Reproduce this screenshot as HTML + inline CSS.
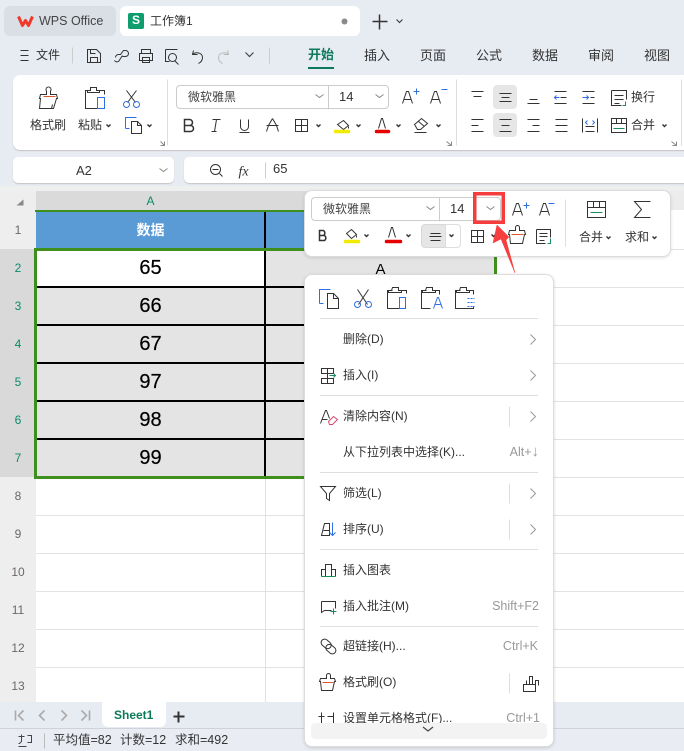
<!DOCTYPE html>
<html lang="zh"><head><meta charset="utf-8">
<style>
html,body{margin:0;padding:0}
body{width:684px;height:751px;overflow:hidden;position:relative;background:#e7ebf2;font-family:"Liberation Sans","Noto Sans CJK SC",sans-serif;font-size:12px;color:#333}
div{position:absolute;box-sizing:border-box}
.t{position:absolute;white-space:nowrap;line-height:16px;font-size:12px;color:#333;z-index:6}
.r{text-align:right;color:#999;font-size:12.5px}
.c{text-align:center}
.h{background:#dfdfdf;height:1px;left:320px;width:218px;z-index:5}
.rh{left:0;width:36px;text-align:center;line-height:38px;height:38px;font-size:12px;color:#6c666c;background:#eeeeee}
.rs{background:#d9d9d9;color:#0b8a68}
.ln{left:36px;width:648px;height:1px;background:#e2e2e2}
.n{left:36px;width:229px;text-align:center;font-size:20px;line-height:38px;height:38px;color:#000;-webkit-text-stroke:.2px #000}
</style></head><body>

<div style="left:4px;top:6px;width:112px;height:30px;background:#dadfe6;border-radius:6px"></div>
<div style="left:120px;top:6px;width:240px;height:30px;background:#fff;border-radius:6px"></div>
<div style="left:128px;top:13px;width:16px;height:16px;background:#0f9d6e;border-radius:2px;color:#fff;font-weight:bold;font-size:12px;line-height:15px;text-align:center">S</div>
<span class="t" style="left:39px;top:13px;font-size:12.5px;color:#444">WPS Office</span>
<span class="t" style="left:150px;top:13px;font-size:12px">工作簿1</span>

<span class="t" style="left:36px;top:47px">文件</span>
<span class="t" style="left:308px;top:47px;font-size:13px;font-weight:bold;color:#0c7a5a">开始</span>
<div style="left:308px;top:67px;width:26px;height:2px;background:#0c7a5a"></div>
<span class="t" style="left:364px;top:48px;font-size:13px">插入</span>
<span class="t" style="left:420px;top:48px;font-size:13px">页面</span>
<span class="t" style="left:476px;top:48px;font-size:13px">公式</span>
<span class="t" style="left:532px;top:48px;font-size:13px">数据</span>
<span class="t" style="left:588px;top:48px;font-size:13px">审阅</span>
<span class="t" style="left:644px;top:48px;font-size:13px">视图</span>

<div style="left:13px;top:75px;width:680px;height:75px;background:#fff;border-radius:7px;box-shadow:0 1px 1px #c4c4c4"></div>
<div style="left:176px;top:85px;width:213px;height:24px;border:1px solid #ccc;border-radius:4px"></div>
<div style="left:493px;top:85px;width:24px;height:24px;background:#e6e6e6;border-radius:4px"></div>
<div style="left:493px;top:113px;width:24px;height:24px;background:#e6e6e6;border-radius:4px"></div>
<span class="t" style="left:30px;top:117px;font-size:12px">格式刷</span>
<span class="t" style="left:78px;top:117px">粘贴</span>
<span class="t" style="left:188px;top:89px;color:#444">微软雅黑</span>
<span class="t" style="left:339px;top:89px;font-size:13px">14</span>
<span class="t" style="left:631px;top:89px">换行</span>
<span class="t" style="left:631px;top:117px">合并</span>

<div style="left:13px;top:157px;width:161px;height:26px;background:#fff;border-radius:5px;box-shadow:0 1px 1px #c4c4c4"></div>
<div style="left:184px;top:157px;width:510px;height:26px;background:#fff;border-radius:5px;box-shadow:0 1px 1px #c4c4c4"></div>
<span class="t" style="left:76px;top:163px;font-size:13px">A2</span>
<span class="t" style="left:273px;top:161px;font-size:13px">65</span>

<!-- grid -->
<div style="left:0;top:186px;width:684px;height:516px;background:#fff"></div>
<div style="left:0;top:186px;width:684px;height:5px;background:#eef0f0"></div>
<div style="left:0;top:191px;width:36px;height:20px;background:#eeeeee"></div>
<div style="left:36px;top:191px;width:648px;height:19px;background:#ececec"></div>
<div style="left:36px;top:191px;width:459px;height:20px;background:#dadada"></div>
<span class="t" style="left:36px;top:193px;width:229px;text-align:center;color:#0b8a68">A</span>
<div class="ln" style="top:249px"></div><div class="ln" style="top:287px"></div><div class="ln" style="top:325px"></div><div class="ln" style="top:363px"></div><div class="ln" style="top:401px"></div><div class="ln" style="top:439px"></div><div class="ln" style="top:477px"></div><div class="ln" style="top:515px"></div><div class="ln" style="top:553px"></div><div class="ln" style="top:591px"></div><div class="ln" style="top:629px"></div><div class="ln" style="top:667px"></div>
<div style="left:265px;top:478px;width:1px;height:224px;background:#e2e2e2"></div>
<div style="left:495px;top:478px;width:1px;height:224px;background:#e2e2e2"></div>
<div class="rh" style="top:211px">1</div>
<div class="rh rs" style="top:249px">2</div><div class="rh rs" style="top:287px">3</div><div class="rh rs" style="top:325px">4</div><div class="rh rs" style="top:363px">5</div><div class="rh rs" style="top:401px">6</div><div class="rh rs" style="top:439px">7</div>
<div class="rh" style="top:477px">8</div><div class="rh" style="top:515px">9</div><div class="rh" style="top:553px">10</div><div class="rh" style="top:591px">11</div><div class="rh" style="top:629px">12</div><div class="rh" style="top:667px;height:35px">13</div>
<div style="left:36px;top:212px;width:459px;height:37px;background:#5b9bd5"></div>
<span class="t" style="left:36px;top:222px;width:229px;text-align:center;color:#fff;font-weight:bold;font-size:14px">数据</span>
<div style="left:37px;top:250px;width:458px;height:226px;background:#e4e4e4"></div>
<div style="left:37px;top:251px;width:228px;height:36px;background:#fff"></div>
<div style="left:37px;top:286px;width:458px;height:2px;background:#000"></div>
<div style="left:37px;top:324px;width:458px;height:2px;background:#000"></div>
<div style="left:37px;top:362px;width:458px;height:2px;background:#000"></div>
<div style="left:37px;top:400px;width:458px;height:2px;background:#000"></div>
<div style="left:37px;top:438px;width:458px;height:2px;background:#000"></div>
<div style="left:264px;top:211px;width:2px;height:266px;background:#000"></div>
<div style="left:35px;top:210px;width:460px;height:2px;background:#3f8f1f"></div>
<div style="left:34px;top:248px;width:463px;height:231px;border:3px solid #3f8f1f"></div>
<div class="n" style="top:249px">65</div><div class="n" style="top:287px">66</div><div class="n" style="top:325px">67</div><div class="n" style="top:363px">97</div><div class="n" style="top:401px">98</div><div class="n" style="top:439px">99</div>
<div style="left:266px;width:229px;top:251px;text-align:center;font-size:15px;line-height:37px;height:23px;overflow:hidden;color:#000">A</div>

<!-- sheet bar -->
<div style="left:0;top:702px;width:684px;height:26px;background:#e7ebf2"></div>
<div style="left:102px;top:702px;width:64px;height:25px;background:#fff;border-radius:0 0 6px 6px"></div>
<span class="t" style="left:114px;top:707px;font-weight:bold;color:#0c7a5a">Sheet1</span>
<div style="left:0;top:728px;width:684px;height:1px;background:#cfd2d6"></div>
<div style="left:0;top:729px;width:684px;height:22px;background:#e9edf3"></div>
<span class="t" style="left:53px;top:732px;font-size:12.5px">平均值=82</span>
<span class="t" style="left:120px;top:732px;font-size:12.5px">计数=12</span>
<span class="t" style="left:175px;top:732px;font-size:12.5px">求和=492</span>

<!-- mini toolbar -->
<div style="left:304px;top:190px;width:367px;height:67px;background:#fff;border-radius:8px;border:1px solid #dcdcdc;box-shadow:0 1px 3px rgba(0,0,0,.12);z-index:3"></div>
<div style="left:311px;top:197px;width:190px;height:24px;border:1px solid #ccc;border-radius:4px;z-index:4"></div>
<div style="left:421px;top:224px;width:40px;height:24px;background:#e6e6e6;border:1px solid #d8d8d8;border-radius:4px;z-index:4"></div>
<div style="left:445px;top:224px;width:16px;height:24px;background:#fff;border:1px solid #ddd;border-radius:0 4px 4px 0;z-index:4"></div>
<span class="t" style="left:323px;top:201px;color:#444">微软雅黑</span>
<span class="t" style="left:450px;top:201px;font-size:13px">14</span>
<span class="t" style="left:579px;top:229px">合并</span>
<span class="t" style="left:625px;top:229px">求和</span>

<!-- context menu -->
<div style="left:304px;top:274px;width:250px;height:473px;background:#fff;border-radius:8px;border:1px solid #dcdcdc;box-shadow:0 1px 3px rgba(0,0,0,.15);z-index:3"></div>
<div class="h" style="top:318px"></div><div class="h" style="top:395px"></div><div class="h" style="top:472px"></div><div class="h" style="top:549px"></div><div class="h" style="top:626px"></div>
<span class="t" style="left:343px;top:331px">删除(D)</span>
<span class="t" style="left:343px;top:367px">插入(I)</span>
<span class="t" style="left:343px;top:408px">清除内容(N)</span>
<span class="t" style="left:343px;top:444px">从下拉列表中选择(K)...</span>
<span class="t r" style="right:145px;top:444px">Alt+<span style="font-size:15px;line-height:12px">↓</span></span>
<span class="t" style="left:343px;top:485px">筛选(L)</span>
<span class="t" style="left:343px;top:521px">排序(U)</span>
<span class="t" style="left:343px;top:562px">插入图表</span>
<span class="t" style="left:343px;top:598px">插入批注(M)</span>
<span class="t r" style="right:145px;top:598px">Shift+F2</span>
<span class="t" style="left:343px;top:638px">超链接(H)...</span>
<span class="t r" style="right:146px;top:638px">Ctrl+K</span>
<span class="t" style="left:343px;top:674px">格式刷(O)</span>
<span class="t" style="left:343px;top:710px">设置单元格格式(F)...</span>
<span class="t r" style="right:144px;top:710px">Ctrl+1</span>

<svg width="684" height="751" viewBox="0 0 684 751" style="position:absolute;left:0;top:0;z-index:7" fill="none" stroke="#333" stroke-width="1">
<g transform="translate(.5 .5)">
<!-- WPS logo -->
<path d="M18 16l4 9 3-5 3 5 4-9" stroke="#f0392b" stroke-width="3" stroke-linejoin="round"/>
<circle cx="344" cy="21" r="3" fill="#8a8a8a" stroke="none"/>
<path d="M372 21h15M379 14v15" stroke="#333" stroke-width="1.500"/>
<path d="M396 19l3 3 3-3M245 52l4 4 4-4" stroke="#444" stroke-width="1.200"/>
<!-- quick bar -->
<path d="M20 50h8M20 55h8M20 60h8"/>
<path d="M72 47v16M269 47v16" stroke="#ccc"/>
<path d="M87 49h9l4 4v9H87zM90 49v4h5M90 62v-5h7v5"/>
<path d="M115 57a3 3 0 0 1 3-3h2l3-4h2a3 3 0 0 1 0 6h-3M114 60a3 3 0 0 0 4 1l4-6"/>
<path d="M141 53v-4h9v4M139 53h13v7h-13zM142 57h7v5h-7z"/>
<path d="M165 49h12M165 49v12h4M174 60l4 4"/><circle cx="172" cy="57" r="4"/>
<path d="M193 50l-1 4h5M192 54c3-3 10-2 10 3 0 3-2 5-4 6"/>
<path d="M227 50l1 4h-5M228 54c-3-3-10-2-10 3 0 3 2 5 4 6" stroke="#bbb"/>
<!-- ribbon left -->
<path d="M46 94v-3.500a2.500 2.500 0 1 1 4 0V94h6l1 4h-1l-3 10H39l1-10h-1l1-4zM51 108l1-4"/>
<path d="M43 96h12" stroke="#d8592b"/>
<path d="M90 90h-5v18h12M99 90h5v4M90 87h6v3h3v2h-12v-2h3z"/>
<rect x="97" y="97" width="7" height="11" stroke="#2f6fe0"/>
<path d="M126 90l9 12M136 90l-9 12"/>
<circle cx="126" cy="104" r="3" stroke="#2f6fe0"/><circle cx="136" cy="104" r="3" stroke="#2f6fe0"/>
<path d="M125 128v-11h11M125 128h4" stroke="#2f6fe0"/>
<path d="M131 121h6l4 4v8h-10zM137 121v4h4"/>
<path d="M106 124l2 2 2-2M147 124l2 2 2-2M316 124l2 2 2-2M356 124l2 2 2-2M396 124l2 2 2-2M436 124l2 2 2-2M662 124l2 2 2-2" stroke-width="1.400"/>
<path d="M160 141l4 4M164 141v4h-4M446 141l5 4M451 141v4h-4M671 141l5 4M676 141v4h-4" stroke="#888"/>
<path d="M167 79v66M456 79v66M681 79v66" stroke="#ddd"/>
<!-- combos -->
<path d="M328 85v24" stroke="#ccc"/>
<path d="M315 94l4 3 4-3M375 94l4 3 4-3" stroke="#888"/>
<path d="M402 103l4-12h2l4 12M403 99h8"/><path d="M413 91h6M416 88v6" stroke="#2f6fe0"/>
<path d="M430 103l4-12h2l4 12M431 99h8"/><path d="M441 89h6" stroke="#2f6fe0"/>
<!-- row 2 -->
<path d="M184 119h5a3 3 0 0 1 0 6h-5zM184 125h6a3 3 0 0 1 0 6h-6z" stroke-width="1.500"/>
<path d="M212 119h8M216 119l-2 12M211 131h5"/>
<path d="M240 119v7a4 4 0 0 0 8 0v-7M239 132h10"/>
<path d="M272 118l-4 7M272 118l4 7M266 125h12M268 125l-2 6M276 125l2 6"/>
<rect x="295" y="119" width="12" height="12"/><path d="M301 119v12M295 125h12"/>
<path d="M337 124l6-4 5 5-5 4zM348 126v2"/><path d="M335 131h13" stroke="#f2ea00" stroke-width="3.500" stroke-linecap="round"/>
<path d="M378 128l3-10h1l3 10"/><path d="M376 131h12" stroke="#e60000" stroke-width="3.500" stroke-linecap="round"/>
<path d="M414 124l7-6 6 5-7 6h-3zM418 121l6 5M414 132h12"/>
<!-- align -->
<path d="M471 91h12M473 96h8"/><path d="M499 93h12M501 97h8M499 101h12"/><path d="M529 99h8M527 103h12"/>
<path d="M554 91h12M554 103h12"/><path d="M560 97h6"/><path d="M554 97h5M556 95l-2 2 2 2" stroke="#2f6fe0"/>
<path d="M582 91h12M582 103h12M590 97h4"/><path d="M582 97h6M586 95l2 2-2 2" stroke="#2f6fe0"/>
<path d="M471 119h12M471 125h7M471 131h12"/><path d="M499 119h12M501 125h8M499 131h12"/><path d="M527 119h12M532 125h7M527 131h12"/><path d="M555 119h12M555 125h12M555 131h12"/>
<path d="M582 118v14M597 118v14M585 126h9M585 131h9"/><path d="M587 120l-2 2 2 2M592 120l2 2-2 2" stroke="#2f6fe0"/>
<path d="M611 90h15v9M611 90v15h10M614 95h9M614 99h9M614 103h5"/><path d="M625 101v4h-3" stroke="#1a8a5a"/>
<rect x="611" y="118" width="15" height="14"/><path d="M616 118v5M621 118v5M611 123h15"/><path d="M613 128h11" stroke="#1a8a5a"/>
<!-- name / formula -->
<path d="M159 168l4 3 4-3" stroke="#888"/>
<circle cx="215" cy="169" r="5"/><path d="M212 169h6M219 173l3 3"/>
<text x="238" y="175" font-family="Liberation Serif" font-style="italic" font-size="14" fill="#333" stroke="none">fx</text>
<path d="M265 162v16" stroke="#ccc"/>
<!-- grid misc -->
<path d="M16 205l7-6v6z" fill="#888" stroke="none"/>
<path d="M15 710v10M23 710l-5 5 5 5M44 710l-5 5 5 5M61 710l5 5-5 5M81 710l5 5-5 5M89 710v10" stroke="#aaa" stroke-width="1.600"/>
<path d="M173 716h11M178 711v11" stroke-width="2"/>
<path d="M44 733v15" stroke="#bbb"/>
<path d="M18 736h6M21 734v7l-2 2h-1M27 735h4v7h-4M18 746h8" stroke="#444"/>
<!-- mini toolbar -->
<path d="M439 197v24" stroke="#ccc"/>
<path d="M426 206l4 3 4-3M486 206l4 3 4-3" stroke="#888"/>
<path d="M512 215l4-12h2l4 12M513 211h8"/><path d="M523 205h6M526 202v6" stroke="#2f6fe0"/>
<path d="M539 215l4-12h2l4 12M540 211h8"/><path d="M548 203h6" stroke="#2f6fe0"/>
<path d="M565 199v47" stroke="#ddd"/>
<rect x="587" y="201" width="18" height="16"/><path d="M593 201v6M599 201v6M587 207h18"/><path d="M590 212h12" stroke="#1a8a5a"/>
<path d="M650 201h-16l7 8-7 8h16"/>
<path d="M319 230h4a3 3 0 0 1 0 5h-4zM319 235h5a3 3 0 0 1 0 5h-5z" stroke-width="1.500"/>
<path d="M346 233l5-4 5 5-5 4zM356 235v2"/><path d="M345 241h13" stroke="#f2ea00" stroke-width="3.500" stroke-linecap="round"/>
<path d="M388 237l3-10h1l3 10"/><path d="M386 241h14" stroke="#e60000" stroke-width="3.500" stroke-linecap="round"/>
<path d="M430 233h10M429 236h12M430 240h10"/>
<rect x="471" y="230" width="12" height="12"/><path d="M477 230v12M471 236h12"/>
<path d="M364 234l2 2 2-2M406 234l2 2 2-2M449 234l2 2 2-2M491 234l2 2 2-2M606 236l2 2 2-2M652 236l2 2 2-2" stroke-width="1.400"/>
<path d="M515 230v-3a2 2 0 0 1 4 0v3h5l1 4h-1l-2 9h-12l-1-9h-1l1-4z"/><path d="M511 234h12" stroke="#d8592b"/>
<path d="M536 229h14v8M536 229v14h9M539 233h8M539 236h8M539 240h5"/><path d="M550 238v5h-3" stroke="#1a8a5a"/>
<!-- menu top icons -->
<path d="M319 303v-14h11M319 303h4" stroke="#2f6fe0"/>
<path d="M327 293h6l5 5v10h-11zM333 293v5h5"/>
<path d="M357 289l10 15M368 289l-10 15"/><circle cx="357" cy="304" r="3" stroke="#2f6fe0"/><circle cx="368" cy="304" r="3" stroke="#2f6fe0"/>
<path d="M392 290h-5v18h12M400 290h6v3M392 287h6v3h3v2h-13v-2h3z"/><rect x="399" y="297" width="6" height="11" stroke="#2f6fe0"/>
<path d="M426 290h-5v18h9M434 290h5v4M426 287h6v3h3v2h-13v-2h3z"/><path d="M433 308l4-11h1l4 11M434 304h7" stroke="#2f6fe0"/>
<path d="M460 290h-5v18h18v-2M468 290h5v4M460 287h6v3h3v2h-13v-2h3z"/><path d="M467 298h7M467 302h7M467 306h7" stroke="#2f6fe0" stroke-dasharray="2 1"/>
<!-- chevrons -->
<path d="M530 334l5 5-5 5M530 370l5 5-5 5M530 411l5 5-5 5M530 488l5 5-5 5M530 524l5 5-5 5" stroke="#999"/>
<path d="M509 406v20M509 483v20M509 519v20M509 673v20" stroke="#ddd"/>
<!-- menu icons -->
<path d="M321 368h12v5h-12zM327 368v5M321 373h6v5h-6M321 378h12v5h-12zM327 378v5"/><path d="M329 375h6M333 373l2 2-2 2" stroke="#1a8a5a"/>
<path d="M320 423l5-13h1l3 8M321 419h6"/><path d="M328 421l5-5 4 3-5 5h-3z" stroke="#d9486a"/>
<path d="M320 486h15l-6 7v7l-3-2v-5z"/>
<path d="M321 535l3-12h5v12zM323 530h6"/><path d="M332 522v13M329 532l3 3 3-3" stroke="#2f6fe0"/>
<path d="M321 576v-7h4M325 576v-12h6v12M331 569h4v7"/><path d="M321 576h14" stroke="#1a8a5a"/>
<path d="M321 601h14v7M321 601v11l3-2h7"/><path d="M330 611h6M333 608v6" stroke="#1a8a5a"/>
<g transform="rotate(40 328 646)"><rect x="319" y="642" width="11" height="7" rx="3.500"/><rect x="326" y="643" width="11" height="7" rx="3.500"/></g>
<path d="M326 678v-3a2 2 0 0 1 4 0v3h4l1 3h-1l-2 9h-11l-1-9h-1l1-3z"/><path d="M322 682h11" stroke="#d8592b"/>
<path d="M523 684h12v7h-12zM526 684v-4M529 684v-8h3v8M535 684v-4h3v5"/>
<path d="M321 712v11M318 716h6M333 712v11M327 716h6"/>
</g>
<!-- arrow + box -->
<polygon points="497,225 509,237 506,240 515,273 501,239 493,243" fill="#f73f3f" stroke="#f73f3f" stroke-width=".5"/>
<rect x="474.750" y="193.750" width="28.500" height="28.500" stroke="#f53d3d" stroke-width="3.500"/>
</svg>
<div style="left:311px;top:723px;width:236px;height:16px;background:#f3f3f3;border-radius:4px;z-index:8"></div>
<svg width="12" height="8" style="position:absolute;left:422px;top:726px;z-index:9" fill="none" stroke="#444"><path d="M1 1l5 4 5-4" stroke-width="1.200"/></svg>
<div style="left:305px;top:739px;width:248px;height:7px;background:#fff;border-radius:0 0 7px 7px;z-index:8"></div>
</body></html>
